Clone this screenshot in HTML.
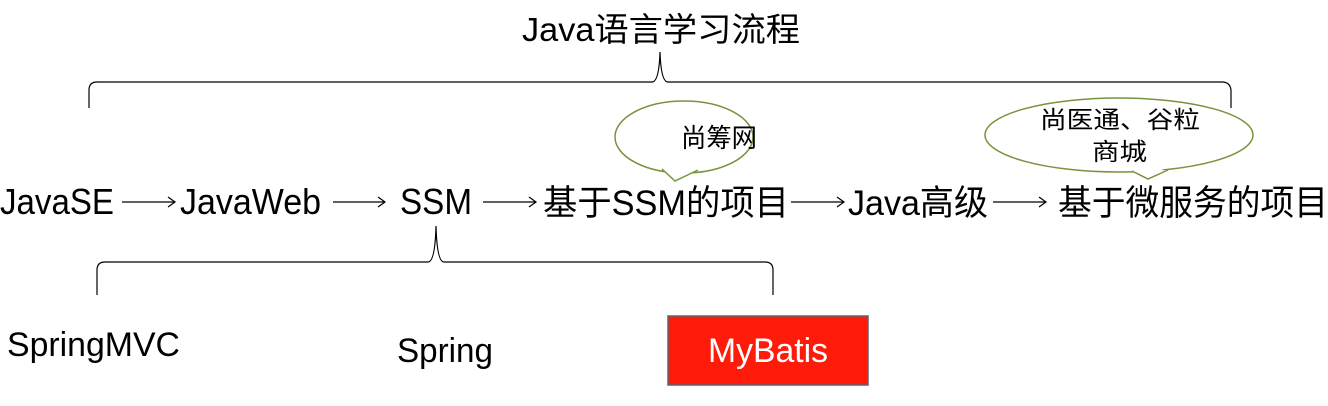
<!DOCTYPE html>
<html><head><meta charset="utf-8"><style>
html,body{margin:0;padding:0;background:#fff;width:1328px;height:406px;overflow:hidden}
svg text{font-family:"Liberation Sans","Noto Sans CJK SC",sans-serif;fill:#000}
</style></head><body>
<svg width="1328" height="406" viewBox="0 0 1328 406" xmlns="http://www.w3.org/2000/svg">
<g fill="none" stroke="#000" stroke-width="1.2">
<path d="M89 108 V90 Q89 82 97 82 H652 Q659 82 660 52 Q661 82 668 82 H1222 Q1230 82 1231 90 V108"/>
<path d="M97 295 V270 Q97 262 105 262 H428 Q435 262 436 226 Q437 262 444 262 H765 Q773 262 773 270 V295"/>
<path d="M122 202 H174 M168 197 L175 202 L168 207"/>
<path d="M333 202 H384 M378 197 L385 202 L378 207"/>
<path d="M483 202 H535 M529 197 L536 202 L529 207"/>
<path d="M791 202 H843 M837 197 L844 202 L837 207"/>
<path d="M993 202 H1045 M1039 197 L1046 202 L1039 207"/>
</g>
<g stroke="#77933c" stroke-width="1.5">
<ellipse cx="684" cy="137" rx="69" ry="36" fill="#fff"/>
<ellipse cx="1119" cy="135" rx="134" ry="37" fill="#fff"/>
<path d="M662 169 L675 181 L698 170" fill="#fff"/>
<path d="M1132 171 L1148 179 L1168 170" fill="#fff"/>
</g>
<g fill="#fff"><path d="M664 168 L675 178 L696 168 Z"/><path d="M1134 169 L1148 176 L1166 168 Z"/></g>
<text x="522" y="41" font-size="33" textLength="278" lengthAdjust="spacingAndGlyphs">Java语言学习流程</text>
<text x="0" y="214" font-size="36" textLength="114" lengthAdjust="spacingAndGlyphs">JavaSE</text>
<text x="180" y="214" font-size="36" textLength="141" lengthAdjust="spacingAndGlyphs">JavaWeb</text>
<text x="400" y="214" font-size="36" textLength="72" lengthAdjust="spacingAndGlyphs">SSM</text>
<text x="543" y="215" font-size="35" textLength="246" lengthAdjust="spacingAndGlyphs">基于SSM的项目</text>
<text x="848" y="215" font-size="35" textLength="140" lengthAdjust="spacingAndGlyphs">Java高级</text>
<text x="1058" y="215" font-size="35" textLength="270" lengthAdjust="spacingAndGlyphs">基于微服务的项目</text>
<text x="681" y="147" font-size="26" textLength="76" lengthAdjust="spacingAndGlyphs">尚筹网</text>
<text x="1040" y="128" font-size="24" textLength="160" lengthAdjust="spacingAndGlyphs">尚医通、谷粒</text>
<text x="1092" y="160" font-size="24" textLength="55" lengthAdjust="spacingAndGlyphs">商城</text>
<text x="7" y="356" font-size="34" textLength="173" lengthAdjust="spacingAndGlyphs">SpringMVC</text>
<text x="397" y="362" font-size="34" textLength="96" lengthAdjust="spacingAndGlyphs">Spring</text>
<rect x="668" y="316" width="200" height="69" fill="#ff1a0a" stroke="#5f6373" stroke-width="1.5"/>
<text x="708" y="362" font-size="34" style="fill:#fff" textLength="120" lengthAdjust="spacingAndGlyphs">MyBatis</text>
</svg>
</body></html>
